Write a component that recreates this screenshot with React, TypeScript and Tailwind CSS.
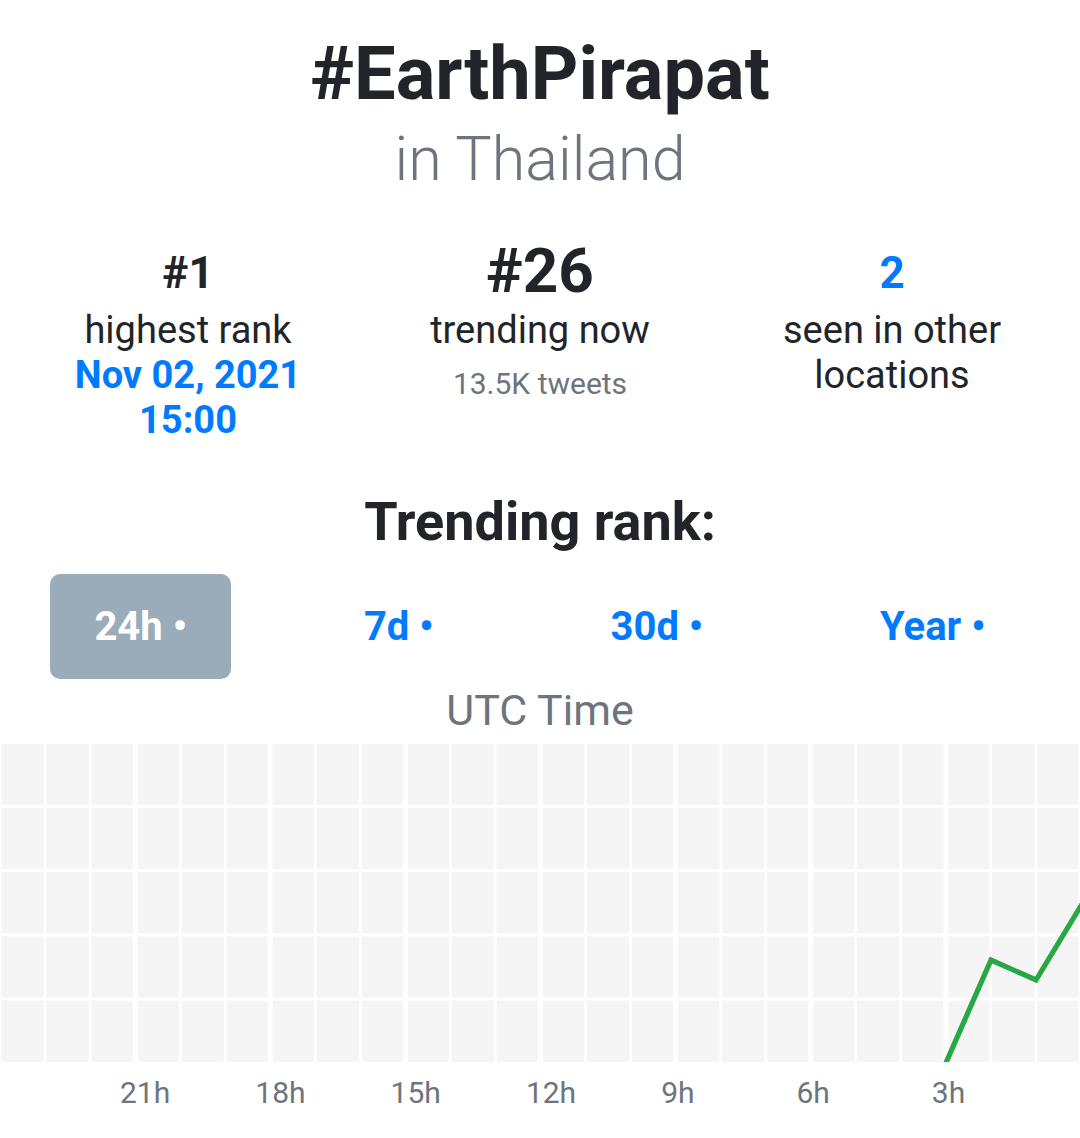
import React from "react";

const tabs = [
  { label: "24h", active: true },
  { label: "7d", active: false },
  { label: "30d", active: false },
  { label: "Year", active: false },
];

const hours = ["21h", "18h", "15h", "12h", "9h", "6h", "3h"];

function RankChart() {
  const pitch = 45.04;
  const cols = Array.from({ length: 25 }, (_, k) => k);
  return (
    <svg width="1080" height="318" viewBox="0 0 1080 318" className="block w-full">
      <rect width="1080" height="318" fill="#f5f5f5" />
      {cols.map((k) => {
        const thick = k % 3 === 0 && k !== 0;
        const w = thick ? 5 : 2.6;
        return <rect key={k} x={k * pitch - w / 2} y={0} width={w} height={318} fill="#ffffff" />;
      })}
      {[1, 2, 3, 4].map((j) => (
        <rect key={j} x={0} y={j * 64.25 - 3.3} width={1080} height={3} fill="#ffffff" />
      ))}
      <polyline
        points="945,321 991,216 1036,236 1082,160"
        fill="none"
        stroke="#28a745"
        strokeWidth="5.2"
        strokeLinejoin="miter"
      />
    </svg>
  );
}

export default function App() {
  return (
    <div className="w-full min-h-[1138px] bg-white flex flex-col items-center text-center font-['Roboto',sans-serif] overflow-hidden">
      {/* Header */}
      <h1 className="pt-[30px] text-[74px] leading-[88px] font-bold text-[#212529]">#EarthPirapat</h1>
      <div className="mt-[5px] text-[61px] leading-[72px] font-light text-[#6c757d]">in Thailand</div>

      {/* Stats */}
      <div className="mt-[47px] w-full px-3 grid grid-cols-3">
        <div className="flex flex-col items-center">
          <div className="text-[44px] leading-[62px] font-bold text-[#212529]">#1</div>
          <div className="mt-[4px] text-[38px] leading-[45px] text-[#212529]">highest rank</div>
          <div className="text-[38px] leading-[45px] font-bold text-[#007bff]">
            Nov 02, 2021
            <br />
            15:00
          </div>
        </div>
        <div className="flex flex-col items-center">
          <div className="text-[62px] leading-[58px] font-bold text-[#212529]">#26</div>
          <div className="mt-[8px] text-[38px] leading-[45px] text-[#212529]">trending now</div>
          <div className="mt-[11px] text-[30px] leading-[40px] text-[#6c757d]">13.5K tweets</div>
        </div>
        <div className="flex flex-col items-center">
          <div className="text-[44px] leading-[62px] font-bold text-[#007bff]">2</div>
          <div className="mt-[4px] text-[38px] leading-[45px] text-[#212529]">
            seen in other
            <br />
            locations
          </div>
        </div>
      </div>

      {/* Trending rank */}
      <h2 className="mt-[48px] text-[54px] leading-[62px] font-bold text-[#212529]">Trending rank:</h2>

      <div className="mt-[21px] w-full px-[6px] flex justify-around">
        {tabs.map((t) => (
          <button
            key={t.label}
            className={
              t.active
                ? "h-[105px] px-[44px] rounded-[10px] bg-[#9aabba] text-white text-[40px] font-bold leading-[47px] flex items-center"
                : "h-[105px] px-[44px] rounded-[10px] text-[#007bff] text-[40px] font-bold leading-[47px] flex items-center"
            }
          >
            {t.label} •
          </button>
        ))}
      </div>

      <div className="mt-[6px] text-[43px] leading-[50px] text-[#6c757d]">UTC Time</div>

      <div className="mt-[9px] w-full">
        <RankChart />
      </div>

      <div className="mt-[11px] w-full flex pl-[120px] text-left">
        {hours.map((h) => (
          <div key={h} className="w-[135.3px] shrink-0 text-[30px] leading-[40px] text-[#6c757d]">
            {h}
          </div>
        ))}
      </div>
    </div>
  );
}
